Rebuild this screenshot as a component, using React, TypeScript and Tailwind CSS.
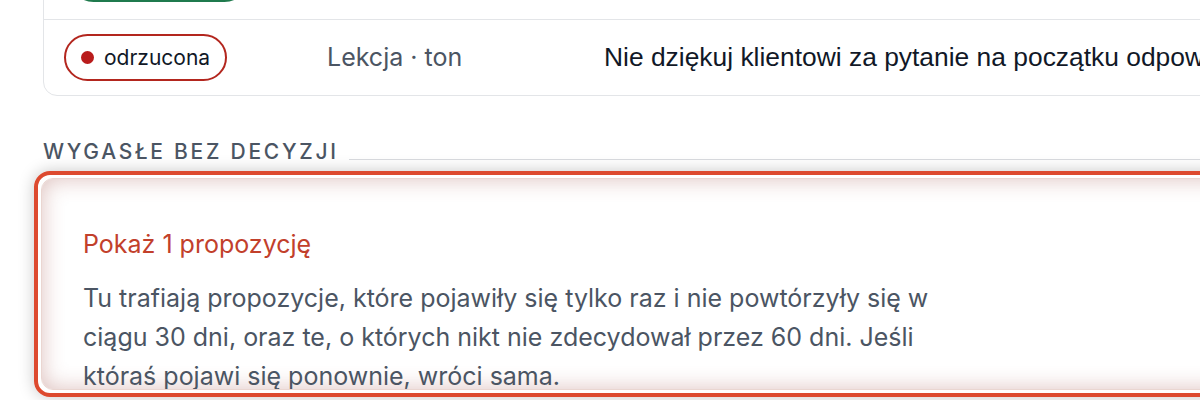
import React from "react";

const inter = { fontFamily: "Inter, 'Noto Sans', sans-serif" };

function Pill({ label, tone }: { label: string; tone: "green" | "red" }) {
  const cls =
    tone === "green"
      ? "border-[#1f7a4d] text-[#1f7a4d]"
      : "border-[#b3261e] text-[#111827]";
  const dot = tone === "green" ? "bg-[#1f7a4d]" : "bg-[#b91c1c]";
  return (
    <span
      className={`inline-flex h-[47px] items-center gap-[10px] rounded-full border-2 bg-white pl-[15px] pr-[15px] text-[21px] ${cls}`}
    >
      <span className={`h-[13px] w-[13px] rounded-full ${dot}`} />
      {label}
    </span>
  );
}

export default function App() {
  return (
    <div
      className="h-[400px] w-[1200px] overflow-hidden bg-white"
      style={inter}
    >
      <div className="ml-[43px] w-[1400px]">
        {/* top card */}
        <div className="-mt-[58px] rounded-[14px] border border-[#e3e5e8] bg-white">
          <div className="grid h-[76px] grid-cols-[263px_277px_1fr] items-center pl-[26px]">
            <div>
              <span className="inline-flex h-[47px] w-[178px] rounded-full border-2 border-[#1f7a4d]" />
            </div>
            <div />
            <div />
          </div>
          <div className="h-px bg-[#e3e5e8]" />
          <div className="grid h-[75px] grid-cols-[263px_277px_1fr] items-center pl-[20px]">
            <div>
              <Pill label="odrzucona" tone="red" />
            </div>
            <div className="text-[25px] text-[#4b5563]">Lekcja · ton</div>
            <div
              className="whitespace-nowrap text-[26.4px] text-[#111827]"
              style={{ fontFamily: "'Liberation Sans', Arial, sans-serif" }}
            >
              Nie dziękuj klientowi za pytanie na początku odpowiedzi
            </div>
          </div>
        </div>

        {/* section heading */}
        <div className="mt-[45px] flex items-end gap-[10px]">
          <h2 className="text-[21px] font-medium uppercase leading-[22px] tracking-[0.13em] text-[#4b5563]">
            Wygasłe bez decyzji
          </h2>
          <div className="mb-[3px] h-px flex-1 bg-[#d6d8dc]" />
        </div>

        {/* highlighted card */}
        <div className="-ml-[9px] mt-[8px] rounded-[16px] border-[4px] border-[#dd4a2f] p-[3px] shadow-[0_0_16px_rgba(0,0,0,0.22)]">
          <div className="h-[212px] overflow-hidden rounded-[12px] border border-[#ead6d1] bg-white pl-[41px] pt-[49px] shadow-[inset_0_0_22px_rgba(150,60,50,0.32)]">
            <div className="text-[25px] leading-[32px] text-[#c2402b]">
              Pokaż 1 propozycję
            </div>
            <p className="mt-[19px] w-[870px] text-[25px] leading-[39px] text-[#4b5563]">
              Tu trafiają propozycje, które pojawiły się tylko raz i nie
              powtórzyły się w ciągu 30 dni, oraz te, o których nikt nie
              zdecydował przez 60 dni. Jeśli któraś pojawi się ponownie, wróci
              sama.
            </p>
          </div>
        </div>
      </div>
    </div>
  );
}
